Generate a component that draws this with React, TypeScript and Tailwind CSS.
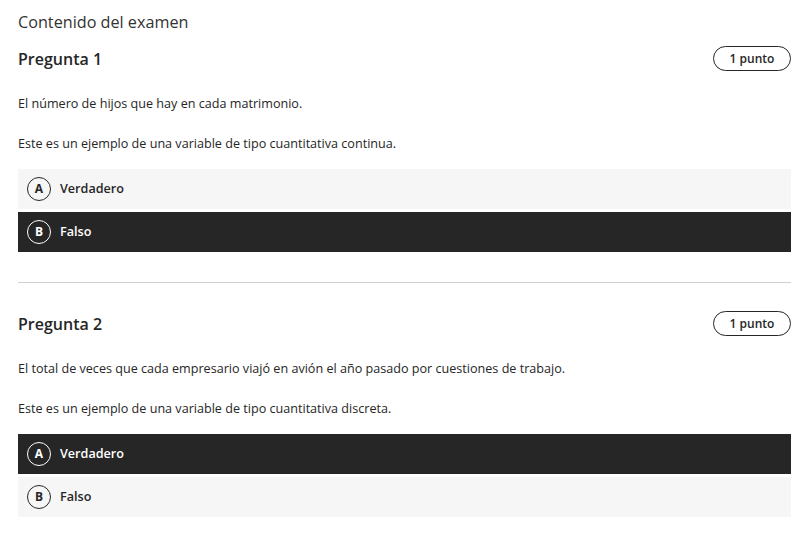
import React from "react";

type Opt = { letter: string; label: string; selected: boolean };

function Option({ letter, label, selected }: Opt) {
  return (
    <div
      className={
        "flex h-[40px] items-center pl-[9px] " +
        (selected ? "bg-[#262626] text-white" : "bg-[#f6f6f6] text-[#262626]")
      }
    >
      <div
        className={
          "flex h-[24px] w-[24px] items-center justify-center rounded-full border text-[12px] font-bold " +
          (selected ? "border-white" : "border-[#262626]")
        }
      >
        {letter}
      </div>
      <span className="ml-[9px] text-[12.6px] font-semibold">{label}</span>
    </div>
  );
}

function Question({
  n,
  stem,
  prompt,
  options,
}: {
  n: number;
  stem: string;
  prompt: string;
  options: Opt[];
}) {
  return (
    <div className="flex flex-col">
      <div className="flex h-[25px] items-center justify-between">
        <h2 className="text-[16px] font-semibold leading-[24px] text-[#262626]">
          Pregunta {n}
        </h2>
        <div className="flex h-[25px] w-[78px] items-center justify-center rounded-full border border-[#262626] text-[12px] font-semibold text-[#262626]">
          1 punto
        </div>
      </div>
      <p className="mt-[24px] text-[12.6px] leading-[18px] text-[#262626]">{stem}</p>
      <p className="mt-[22px] text-[12.6px] leading-[18px] text-[#262626]">{prompt}</p>
      <div className="mt-[16px] flex flex-col gap-[3px]">
        {options.map((o) => (
          <Option key={o.letter} {...o} />
        ))}
      </div>
    </div>
  );
}

export default function App() {
  return (
    <div
      className="min-h-[535px] w-[804px] bg-white pl-[18px] pr-[13px] pt-[10px]"
      style={{ fontFamily: '"Open Sans", "Noto Sans", sans-serif' }}
    >
      <h1 className="text-[16.2px] font-normal leading-[24px] text-[#333333]">
        Contenido del examen
      </h1>
      <div className="mt-[12px]">
        <Question
          n={1}
          stem="El número de hijos que hay en cada matrimonio."
          prompt="Este es un ejemplo de una variable de tipo cuantitativa continua."
          options={[
            { letter: "A", label: "Verdadero", selected: false },
            { letter: "B", label: "Falso", selected: true },
          ]}
        />
      </div>
      <hr className="mt-[30px] border-0 border-t border-[#d0d0d0]" />
      <div className="mt-[28px]">
        <Question
          n={2}
          stem="El total de veces que cada empresario viajó en avión el año pasado por cuestiones de trabajo."
          prompt="Este es un ejemplo de una variable de tipo cuantitativa discreta."
          options={[
            { letter: "A", label: "Verdadero", selected: true },
            { letter: "B", label: "Falso", selected: false },
          ]}
        />
      </div>
    </div>
  );
}
